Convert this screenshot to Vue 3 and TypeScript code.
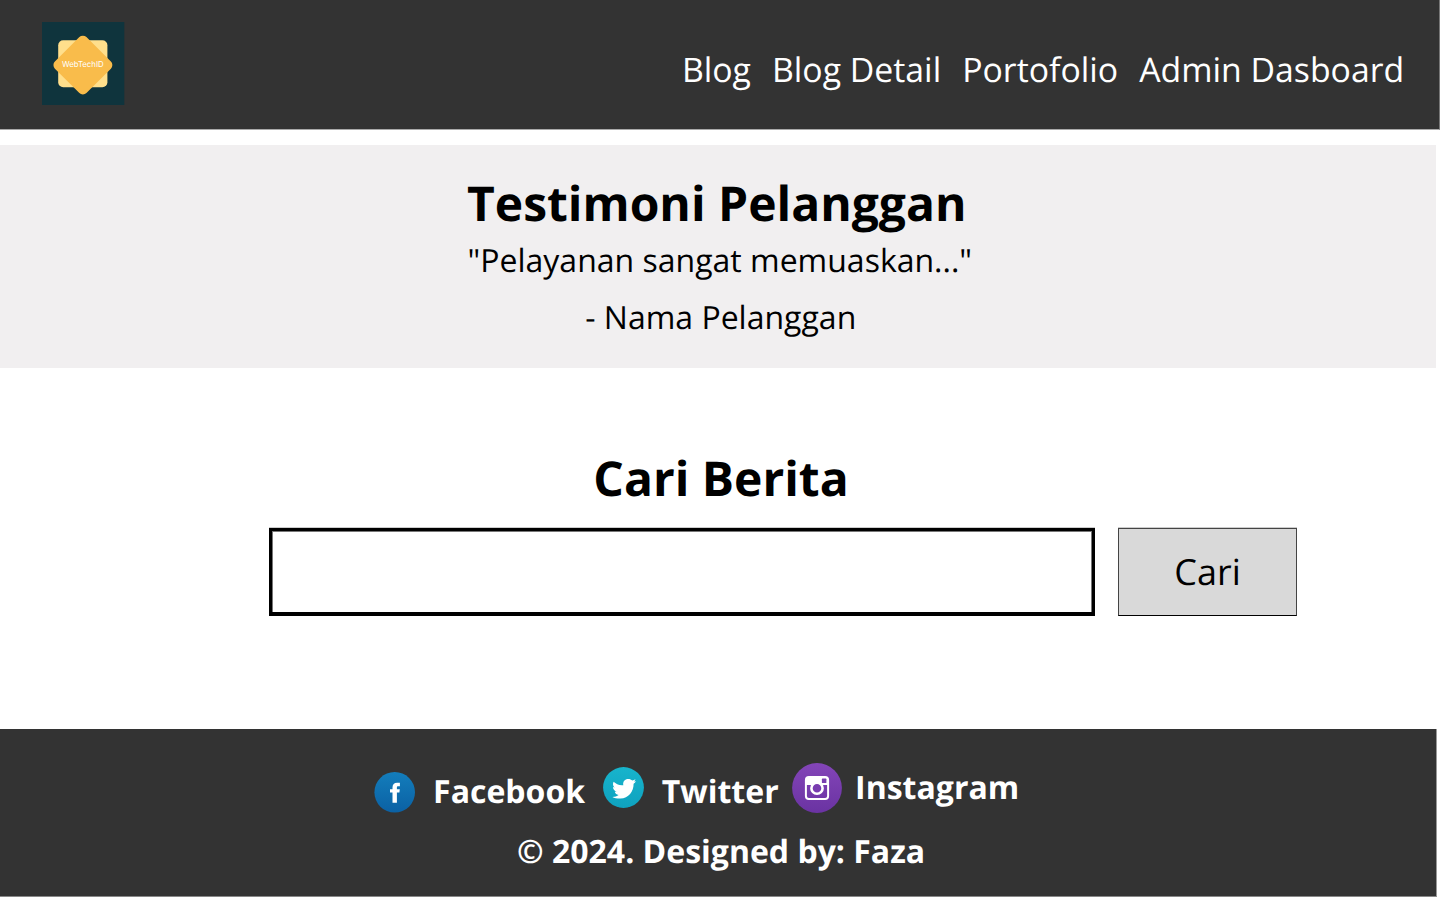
<script setup lang="ts">
import { ref } from 'vue'

const links: string[] = ['Blog', 'Blog Detail', 'Portofolio', 'Admin Dasboard']
const query = ref<string>('')
</script>

<template>
  <div class="page">
    <header class="header">
      <svg class="logo" width="83" height="83" viewBox="0 0 83 83">
        <rect width="82.3" height="83" fill="#0f343d" />
        <rect x="16.2" y="18.2" width="49.2" height="47" rx="5" fill="#ffdf8c" />
        <rect x="18.6" y="20.8" width="44.6" height="44.6" rx="5" fill="#f9bc4b" transform="rotate(45 40.9 43.1)" />
        <text class="logo-text" x="20" y="45.2" textLength="41.6" lengthAdjust="spacingAndGlyphs">WebTechID</text>
      </svg>
      <nav class="nav">
        <a v-for="link in links" :key="link" class="nav-link">{{ link }}</a>
      </nav>
    </header>

    <section class="testimonial">
      <h2 class="title">Testimoni Pelanggan</h2>
      <p class="quote">"Pelayanan sangat memuaskan..."</p>
      <p class="author">- Nama Pelanggan</p>
    </section>

    <section class="search">
      <h2 class="title search-title">Cari Berita</h2>
      <form class="search-row" @submit.prevent>
        <input v-model="query" class="field" type="text" />
        <button class="button" type="submit">Cari</button>
      </form>
    </section>

    <footer class="footer">
      <div class="socials">
        <svg class="facebook-icon" width="41" height="41" viewBox="0 0 41 41">
          <defs>
            <linearGradient id="fb" x1="0" y1="0" x2="0" y2="1">
              <stop offset="0" stop-color="#137dbb" />
              <stop offset="1" stop-color="#0b61a4" />
            </linearGradient>
          </defs>
          <circle cx="20.7" cy="20.3" r="20.3" fill="url(#fb)" />
          <path d="M18.5 30.7V20.6h-2.5v-3.4h2.5v-1.6c0-3.2 1.6-4.8 4.6-4.8h2.8v3.5h-1.6c-1.1 0-1.4.5-1.4 1.4v1.5h2.9l-.4 3.4h-2.5v10.1z" fill="#fff" />
        </svg>
        <span class="social facebook">Facebook</span>
        <svg class="twitter-icon" width="41" height="41" viewBox="0 0 41 41">
          <defs>
            <linearGradient id="tw" x1="0" y1="0" x2="0" y2="1">
              <stop offset="0" stop-color="#17b4cc" />
              <stop offset="1" stop-color="#0fa2bf" />
            </linearGradient>
          </defs>
          <circle cx="20.5" cy="20.5" r="20.4" fill="url(#tw)" />
          <path
            fill="#fff"
            d="M10.6 14.8C13 17 16 18.6 20.3 18.2 19.6 14.5 22 12 25.2 12c1.8 0 3.1.6 4.1 1.6 1.2-.2 2.4-1 3.2-1.3-.5 1-1.1 1.9-1.5 2.3l2-.4c-.7 1.1-1.6 1.8-2.4 2.6.2 7.7-5.1 14.6-13.1 14.8-3 .1-6-.4-8.1-1.6 2.6 0 4.6-.8 6.2-2-2.1-.3-3.3-1.5-3.8-3.2l1.8-.1c-2.2-.9-3.6-2.4-3.7-4.7l1.7.5c-1.8-1.5-2-3.5-1-5.7z"
          />
        </svg>
        <span class="social twitter">Twitter</span>
        <svg class="instagram-icon" width="50" height="50" viewBox="0 0 50 50">
          <defs>
            <linearGradient id="ig" x1="0" y1="0" x2="0" y2="1">
              <stop offset="0" stop-color="#8345b8" />
              <stop offset="1" stop-color="#6a33a2" />
            </linearGradient>
          </defs>
          <circle cx="25" cy="25" r="24.9" fill="url(#ig)" />
          <rect x="13.9" y="13.9" width="22.2" height="22" rx="3" fill="none" stroke="#fff" stroke-width="2" />
          <path d="M13.8 22V17q0-3.1 3.1-3.1h16.2q3.1 0 3.1 3.1v5z" fill="#fff" />
          <rect x="29.9" y="15.6" width="4.5" height="4.5" rx=".6" fill="#7a3fb0" />
          <circle cx="25" cy="25.2" r="5.6" fill="#783caf" stroke="#fff" stroke-width="2.6" />
        </svg>
        <span class="social instagram">Instagram</span>
      </div>
      <p class="copyright">© 2024. Designed by: Faza</p>
    </footer>
  </div>
</template>

<style>
body {
  background: #fff;
}
</style>

<style scoped>
.page {
  width: 1440px;
  height: 900px;
  overflow: hidden;
  background: #fff;
  color: #000;
  font-family: "Open Sans", "Noto Sans", sans-serif;
  text-rendering: geometricPrecision;
  white-space: nowrap;
}

.header {
  display: flex;
  justify-content: space-between;
  align-items: flex-start;
  box-sizing: border-box;
  height: 130px;
  padding: 22px 34.8px 0 41.8px;
  border-right: 1px solid #777;
  border-bottom: 1px solid #aaa;
  background: #333;
}

.logo {
  display: block;
}

.logo-text {
  fill: #fff;
  font-family: Inter, "Open Sans", sans-serif;
  font-size: 8.2px;
  font-weight: 400;
}

.nav {
  display: flex;
  gap: 21px;
  margin-top: 24px;
  color: #fff;
}

.nav-link {
  font-size: 33.8px;
  line-height: 46px;
}

.testimonial {
  display: flex;
  flex-direction: column;
  align-items: flex-start;
  box-sizing: border-box;
  width: 1436px;
  height: 223px;
  margin-top: 15px;
  padding-top: 26px;
  background: #f1eff0;
}

.title {
  margin: 0;
  font-size: 48px;
  font-weight: 700;
  line-height: 66px;
}

.testimonial .title {
  margin-left: 467px;
}

.quote,
.author {
  margin: 0;
  font-size: 32px;
  line-height: 44px;
}

.quote {
  margin: 2px 0 0 467.5px;
}

.author {
  margin: 13px 0 0 585.2px;
}

.search {
  padding-top: 78px;
}

.search-title {
  margin-left: 593.3px;
}

.search-row {
  display: flex;
  gap: 23px;
  margin: 16px 0 0 269px;
}

.field {
  box-sizing: border-box;
  width: 826px;
  height: 88px;
  margin: 0;
  padding: 0 16px;
  border: 3px solid #000;
  border-bottom-width: 4px;
  border-radius: 0;
  outline: none;
  background: #fff;
  box-shadow: inset 1px 1px 0 #777, inset -1px 0 0 #777, 0 -1px 0 #ccc;
  font: 32px "Open Sans", sans-serif;
}

.button {
  box-sizing: border-box;
  width: 179px;
  height: 88px;
  margin: 0;
  padding: 0;
  border: 1px solid #444;
  border-bottom-color: #000;
  border-radius: 0;
  background: #d9d9d9;
  box-shadow: 0 -1px 0 #ccc;
  color: #000;
  font: 36px/50px "Open Sans", sans-serif;
  text-rendering: inherit;
}

.footer {
  box-sizing: border-box;
  width: 1437px;
  height: 168px;
  margin-top: 113px;
  padding-top: 34px;
  border-right: 1px solid #999;
  border-bottom: 1px solid #888;
  background: #333;
  color: #fff;
  font-size: 32px;
  font-weight: 700;
  line-height: 44px;
}

.socials {
  display: flex;
  align-items: flex-start;
  height: 67px;
  padding-left: 374.3px;
}

.facebook-icon {
  margin-top: 8.5px;
}

.twitter-icon {
  margin-top: 4px;
}

.facebook,
.twitter {
  margin-top: 7px;
}

.instagram {
  margin-top: 3px;
}

.facebook {
  width: 152px;
  margin-left: 17.8px;
  margin-right: 17.7px;
}

.twitter {
  width: 112px;
  margin-left: 18px;
  margin-right: 18px;
}

.instagram {
  margin-left: 13.3px;
}

.copyright {
  margin: 0 0 0 517px;
}
</style>
